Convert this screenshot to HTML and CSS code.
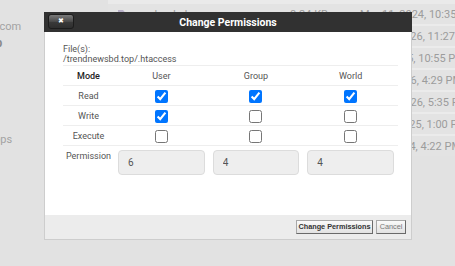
FILE: index.html
```html
<!DOCTYPE html>
<html>
<head>
<meta charset="utf-8">
<link rel="stylesheet" href="styles.css">
</head>
<body>
<div class="page">
  <aside class="side">
    <div class="side-item domain">trendnewsbd.com</div>
    <div class="side-item strong">Backup</div>
    <div class="side-item apps">Apps</div>
  </aside>
  <main class="list">
    <div class="row"><span class="ficon"></span><span class="fname">wp-load.php</span><span class="size">8.24 KB</span><span class="date">Mar 11, 2024, 10:35 AM</span></div>
    <div class="row"><span class="ficon"></span><span class="fname">index.php</span><span class="size">1.2 KB</span><span class="date">Feb 14, 2026, 11:27 AM</span></div>
    <div class="row"><span class="ficon"></span><span class="fname">robots.txt</span><span class="size">68 B</span><span class="date">Jul 8, 2025, 10:55 PM</span></div>
    <div class="row"><span class="ficon"></span><span class="fname">wp-config.php</span><span class="size">3.1 KB</span><span class="date">Jun 9, 2026, 4:29 PM</span></div>
    <div class="row"><span class="ficon"></span><span class="fname">xmlrpc.php</span><span class="size">3.2 KB</span><span class="date">Jan 13, 2026, 5:35 PM</span></div>
    <div class="row"><span class="ficon"></span><span class="fname">license.txt</span><span class="size">19 KB</span><span class="date">Oct 20, 2025, 1:00 PM</span></div>
    <div class="row"><span class="ficon"></span><span class="fname">readme.html</span><span class="size">7.4 KB</span><span class="date">Apr 2, 2024, 4:22 PM</span></div>
  </main>
</div>

<div class="dialog">
  <div class="titlebar">
    <button class="close">&#x2716;</button>
    <div class="title">Change Permissions</div>
  </div>
  <div class="body">
    <div class="file">File(s):<br>/trendnewsbd.top/.htaccess</div>
    <table class="perm">
      <tr class="head"><th class="mode">Mode</th><th>User</th><th>Group</th><th>World</th></tr>
      <tr><td class="mode">Read</td><td><input type="checkbox" checked></td><td><input type="checkbox" checked></td><td><input type="checkbox" checked></td></tr>
      <tr><td class="mode">Write</td><td><input type="checkbox" checked></td><td><input type="checkbox"></td><td><input type="checkbox"></td></tr>
      <tr><td class="mode">Execute</td><td><input type="checkbox"></td><td><input type="checkbox"></td><td><input type="checkbox"></td></tr>
      <tr class="val"><td class="mode">Permission</td><td><input class="num" type="text" value="6"></td><td><input class="num" type="text" value="4"></td><td><input class="num" type="text" value="4"></td></tr>
    </table>
  </div>
  <div class="footer">
    <button class="btn primary">Change Permissions</button>
    <button class="btn cancel">Cancel</button>
  </div>
</div>
</body>
</html>
```

FILE: styles.css
```css
html, body {
  margin: 0;
  padding: 0;
}
body {
  width: 455px;
  height: 266px;
  overflow: hidden;
  background: #e2e2e2;
  font-family: Roboto, "Liberation Sans", sans-serif;
  position: relative;
}
.page {
  display: flex;
  height: 266px;
}
.side {
  width: 108px;
  flex: none;
  overflow: hidden;
  padding-top: 19px;
  color: #a3a3a3;
  font-size: 11px;
}
.side-item {
  white-space: nowrap;
  height: 16px;
  line-height: 16px;
}
.domain {
  margin-left: -67px;
}
.strong {
  font-weight: bold;
  color: #8a8a8a;
  margin-left: -38px;
  font-size: 12px;
}
.apps {
  margin-top: 81px;
  margin-left: -13px;
}
.list {
  flex: 1;
  min-width: 0;
  overflow: hidden;
  padding-top: 2px;
  background: linear-gradient(#eaeaea, #eaeaea) top/100% 4px no-repeat;
}
.row {
  display: flex;
  align-items: center;
  height: 20px;
  border-top: 2px solid #ebebeb;
  background: #e3e3e3;
  font-size: 11px;
  color: #9c9c9c;
  white-space: nowrap;
}
.row > span {
  flex: none;
}
.row:first-child {
  border-top-color: #eaeaea;
}
.ficon {
  width: 7px;
  height: 9px;
  margin-left: 10px;
  background: #b8b0c8;
  clip-path: polygon(0 0, 65% 0, 100% 30%, 100% 100%, 0 100%);
}
.fname {
  width: 153px;
  margin-left: 12px;
}
.size {
  width: 70px;
}

/* dialog */
.dialog {
  position: absolute;
  left: 44px;
  top: 12px;
  width: 366px;
  height: 226px;
  border: 1px solid #cdcdcd;
  background: #fff;
  display: flex;
  flex-direction: column;
}
.titlebar {
  height: 20px;
  background: #313131;
  position: relative;
  display: flex;
  align-items: center;
  justify-content: center;
  margin: -1px -1px 0 -1px;
}
.title {
  color: #fff;
  font-family: Roboto, sans-serif;
  font-weight: bold;
  font-size: 10.5px;
}
.close {
  position: absolute;
  left: 4px;
  top: 2px;
  width: 26px;
  height: 15px;
  padding: 0;
  border: 1px solid #1c1c1c;
  border-radius: 3px;
  background: linear-gradient(#7a7a7a, #4a4a4a 50%, #3a3a3a 51%, #2e2e2e);
  color: #fff;
  font-size: 7px;
  line-height: 13px;
  font-family: "DejaVu Sans", sans-serif;
}
.body {
  flex: 1;
  padding: 12px 12px 0 18px;
}
.file {
  font-size: 9px;
  line-height: 10px;
  color: #555;
}
.perm {
  margin-top: 1px;
  width: 335px;
  border-collapse: collapse;
  table-layout: fixed;
  font-size: 9px;
  color: #555;
}
.perm th, .perm td {
  border-top: 1px solid #eee;
  height: 19px;
  padding: 0;
  text-align: center;
  vertical-align: middle;
  font-weight: normal;
}
.perm th.mode {
  color: #222;
  font-weight: 500;
  width: 51px;
}
.perm input[type=checkbox] {
  margin: 2px 0 0 0;
  width: 13px;
  height: 13px;
  vertical-align: middle;
}
.perm .val td {
  vertical-align: top;
  height: auto;
  padding-top: 4px;
}
.perm .val td.mode {
  padding-top: 5px;
}
.num {
  box-sizing: border-box;
  width: calc(100% - 8px);
  height: 25px;
  margin: 0;
  border: 1px solid #dcdcdc;
  border-radius: 4px;
  background: #eee;
  padding: 0 9px;
  font-family: Roboto, sans-serif;
  font-size: 10px;
  color: #555;
}
.footer {
  height: 24px;
  background: #ececec;
  display: flex;
  align-items: center;
  justify-content: flex-end;
  gap: 3px;
  padding-right: 5px;
}
.btn {
  height: 14px;
  padding: 0;
  border: 1px solid #a8a8a8;
  border-right-color: #6a6a6a;
  border-bottom-color: #6a6a6a;
  background: linear-gradient(#fafafa, #e2e2e2);
  font-family: "Liberation Sans", Arial, sans-serif;
  font-size: 7.3px;
  font-weight: bold;
  color: #333;
  line-height: 12px;
  white-space: nowrap;
}
.primary {
  width: 77px;
}
.cancel {
  width: 30px;
  color: #777;
  font-weight: normal;
}
```
